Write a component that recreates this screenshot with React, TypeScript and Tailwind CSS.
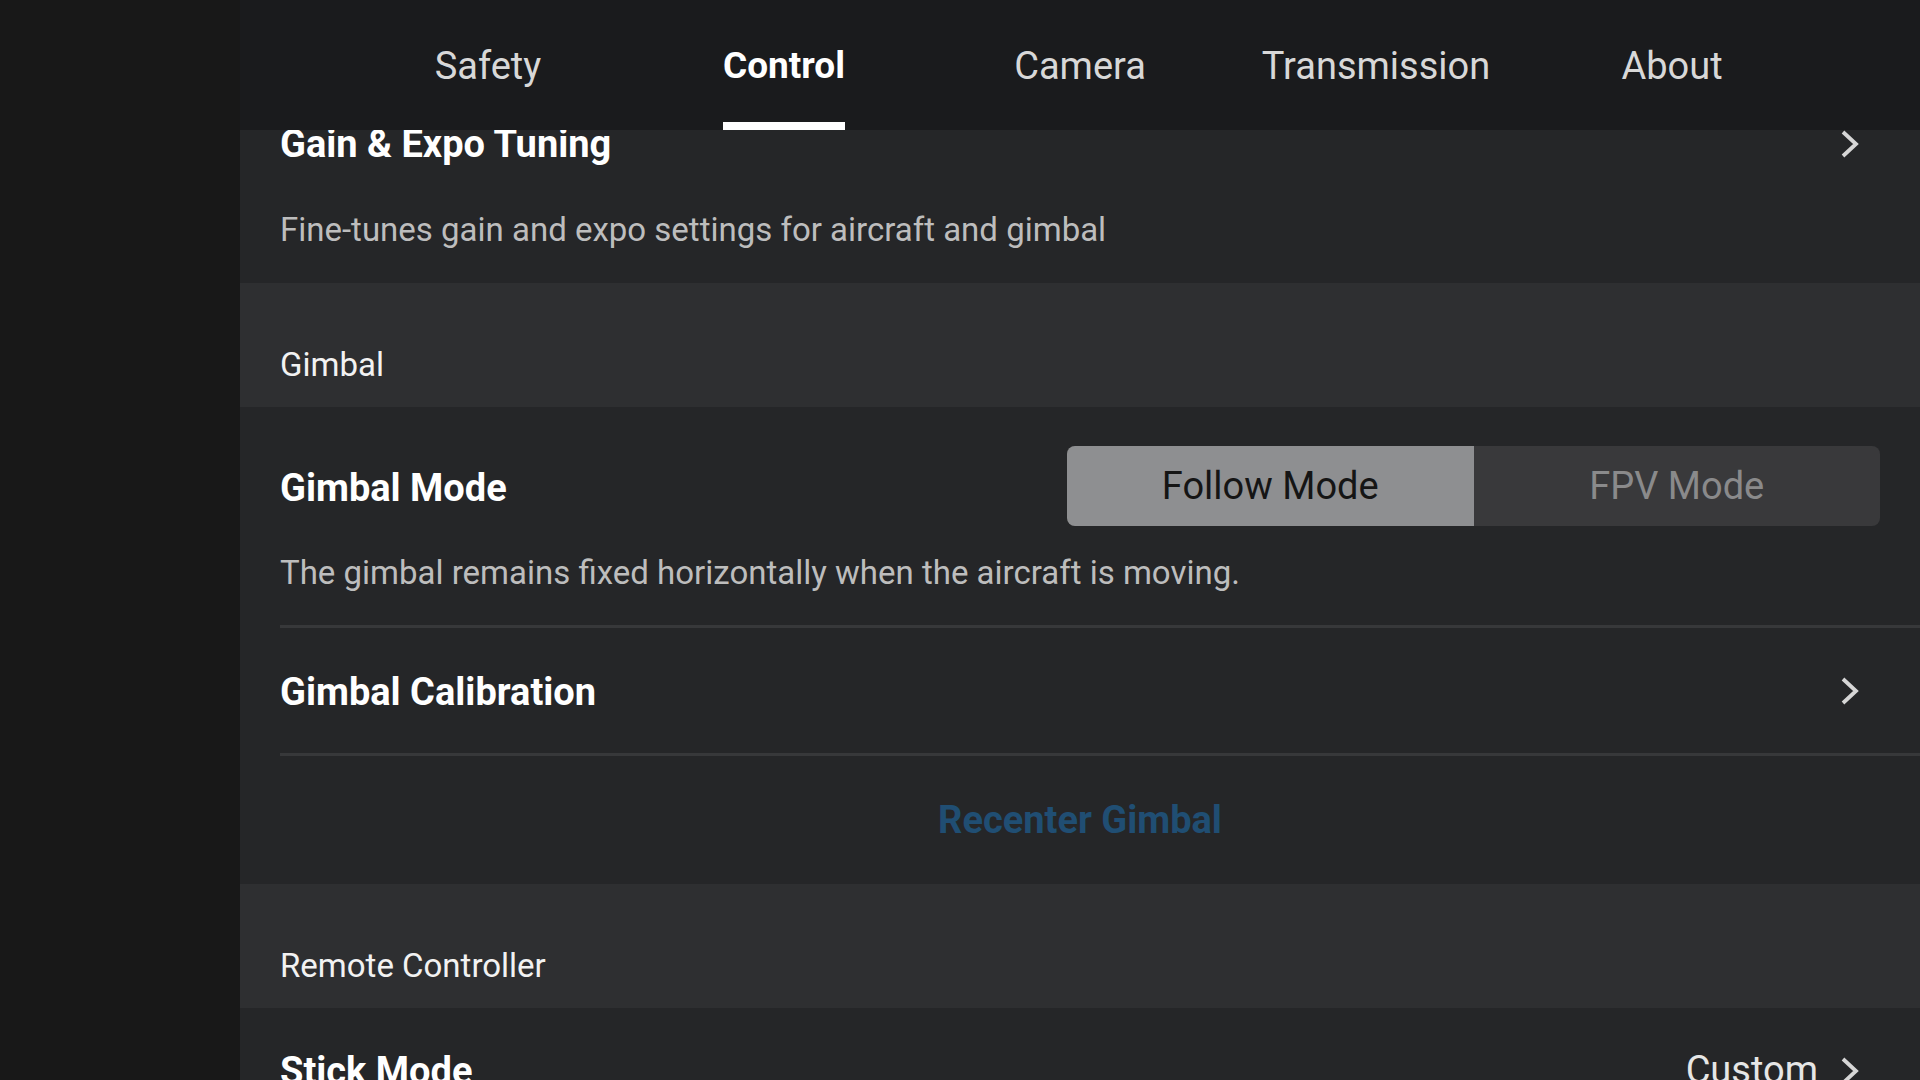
const tabs = ['Safety', 'Control', 'Camera', 'Transmission', 'About'];

function Chevron() {
  return (
    <svg viewBox="0 0 20 30" className="w-[20px] h-[30px]" fill="none">
      <polyline points="3,3 16,15 3,27" stroke="#d6d6d6" strokeWidth="3.8" strokeLinecap="butt" strokeLinejoin="miter" />
    </svg>
  );
}

function SectionHeader({ label }: { label: string }) {
  return (
    <div className="h-[124px] shrink-0 bg-[#2e2f31] flex items-end pl-10 pb-[22px]">
      <span className="text-[33px] leading-[40px] text-[#f2f2f2]">{label}</span>
    </div>
  );
}

export default function App() {
  return (
    <div className="w-[1920px] h-[1080px] overflow-hidden flex bg-[#181818]" style={{ fontFamily: 'Roboto, "Noto Sans", sans-serif' }}>
      {/* left rail */}
      <div className="w-[240px] shrink-0 bg-[#181818]" />

      <div className="flex-1 flex flex-col min-h-0">
        {/* Tabs */}
        <div className="relative z-10 h-[130px] shrink-0 bg-[#1a1b1d] flex justify-center">
          {tabs.map((tab) => {
            const active = tab === 'Control';
            return (
              <div key={tab} className="w-[296px] flex justify-center">
                <div className="flex flex-col items-center">
                  <span
                    className={`mt-[44px] leading-[44px] ${
                      active ? 'text-[37px] font-bold text-white' : 'text-[38px] text-[#d8d8d8]'
                    }`}
                  >
                    {tab}
                  </span>
                  {active && <div className="mt-auto h-[8px] w-full bg-white" />}
                </div>
              </div>
            );
          })}
        </div>

        {/* Scrolled list */}
        <div className="-mt-[67px] shrink-0 flex flex-col bg-[#252628]">
          {/* Gain & Expo Tuning */}
          <div className="pt-[61px] pb-[33px] pl-10 pr-[60px]">
            <div className="flex items-center justify-between h-[40px]">
              <span className="text-[38px] font-bold text-white leading-[40px]">Gain &amp; Expo Tuning</span>
              <Chevron />
            </div>
            <p className="mt-[46px] text-[33px] leading-[40px] text-[#bdbdbd]">
              Fine-tunes gain and expo settings for aircraft and gimbal
            </p>
          </div>

          <SectionHeader label="Gimbal" />

          {/* Gimbal Mode */}
          <div className="pl-10">
            <div className="pr-10 pt-[39px] pb-[32px]">
              <div className="flex items-center justify-between h-[80px]">
                <span className="text-[38px] font-bold text-white leading-[40px] mt-[3px]">Gimbal Mode</span>
                <div className="flex w-[813px] h-[80px] rounded-[8px] overflow-hidden bg-[#39393b]">
                  <div className="flex-1 bg-[#8e8f91] flex items-center justify-center text-[38px] text-[#151515]">
                    Follow Mode
                  </div>
                  <div className="flex-1 flex items-center justify-center text-[38px] text-[#8a8a8b]">
                    FPV Mode
                  </div>
                </div>
              </div>
              <p className="mt-[27px] text-[33px] leading-[40px] text-[#bdbdbd]">
                The gimbal remains fixed horizontally when the aircraft is moving.
              </p>
            </div>
            <div className="h-[3px] bg-[#37383a]" />
            {/* Gimbal Calibration */}
            <div className="h-[125px] flex items-center justify-between pr-[60px]">
              <span className="text-[38px] font-bold text-white leading-[40px] mt-[3px]">Gimbal Calibration</span>
              <Chevron />
            </div>
            <div className="h-[3px] bg-[#37383a]" />
          </div>

          {/* Recenter */}
          <div className="h-[128px] flex items-center justify-center">
            <span className="text-[38px] font-bold text-[#204e73]">Recenter Gimbal</span>
          </div>

          <SectionHeader label="Remote Controller" />

          {/* Stick Mode */}
          <div className="h-[125px] flex items-center justify-between pl-10 pr-[60px]">
            <span className="text-[38px] font-bold text-white leading-[40px]">Stick Mode</span>
            <div className="flex items-center gap-[22px]">
              <span className="text-[38px] text-[#e6e6e6]">Custom</span>
              <Chevron />
            </div>
          </div>
        </div>
      </div>
    </div>
  );
}
